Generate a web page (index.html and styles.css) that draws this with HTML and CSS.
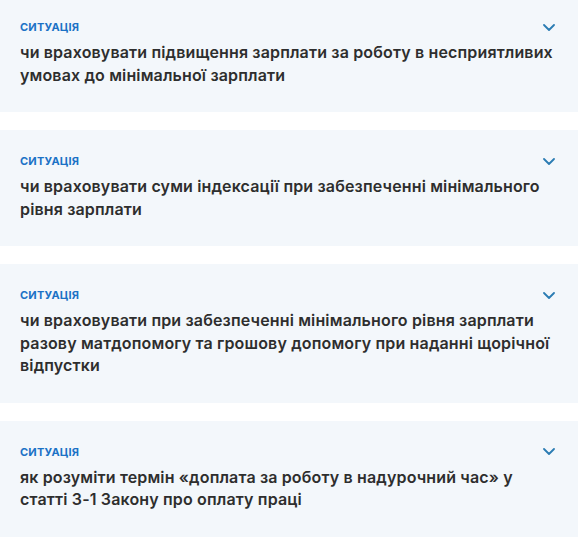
FILE: index.html
```html
<!DOCTYPE html>
<html lang="uk">
<head>
<meta charset="utf-8">
<link rel="stylesheet" href="styles.css">
</head>
<body>
<div class="list">
  <div class="card">
    <div class="head"><span class="label">Ситуація</span><svg class="chev" width="12" height="7" viewBox="0 0 12 7"><path d="M1 1l5 5 5-5" fill="none" stroke="#2b7cb3" stroke-width="1.8" stroke-linecap="round" stroke-linejoin="round"/></svg></div>
    <div class="title">чи враховувати підвищення зарплати за роботу в несприятливих умовах до мінімальної зарплати</div>
  </div>
  <div class="card">
    <div class="head"><span class="label">Ситуація</span><svg class="chev" width="12" height="7" viewBox="0 0 12 7"><path d="M1 1l5 5 5-5" fill="none" stroke="#2b7cb3" stroke-width="1.8" stroke-linecap="round" stroke-linejoin="round"/></svg></div>
    <div class="title">чи враховувати суми індексації при забезпеченні мінімального рівня зарплати</div>
  </div>
  <div class="card">
    <div class="head"><span class="label">Ситуація</span><svg class="chev" width="12" height="7" viewBox="0 0 12 7"><path d="M1 1l5 5 5-5" fill="none" stroke="#2b7cb3" stroke-width="1.8" stroke-linecap="round" stroke-linejoin="round"/></svg></div>
    <div class="title">чи враховувати при забезпеченні мінімального рівня зарплати разову матдопомогу та грошову допомогу при наданні щорічної відпустки</div>
  </div>
  <div class="card">
    <div class="head"><span class="label">Ситуація</span><svg class="chev" width="12" height="7" viewBox="0 0 12 7"><path d="M1 1l5 5 5-5" fill="none" stroke="#2b7cb3" stroke-width="1.8" stroke-linecap="round" stroke-linejoin="round"/></svg></div>
    <div class="title">як розуміти термін «доплата за роботу в надурочний час» у статті 3-1 Закону про оплату праці</div>
  </div>
</div>
</body>
</html>
```

FILE: styles.css
```css
html, body {
  margin: 0;
  padding: 0;
  background: #ffffff;
}
body {
  font-family: Inter, "Open Sans", "Liberation Sans", sans-serif;
  overflow: hidden;
}
.list {
  width: 578px;
  margin-top: -4px;
  display: flex;
  flex-direction: column;
  gap: 18px;
}
.card {
  background: #f3f7fb;
  padding: 24px 22px 26px 20px;
}
.head {
  display: flex;
  align-items: center;
  justify-content: space-between;
  height: 14px;
  margin-bottom: 7px;
}
.label {
  font-size: 11px;
  line-height: 14px;
  font-weight: 700;
  text-transform: uppercase;
  color: #1b72c6;
  letter-spacing: 0.2px;
}
.chev {
  display: block;
  margin-right: 1px;
}
.title {
  font-size: 16px;
  line-height: 22.5px;
  font-weight: 600;
  color: #2e2e2e;
  letter-spacing: 0.15px;
}
```
